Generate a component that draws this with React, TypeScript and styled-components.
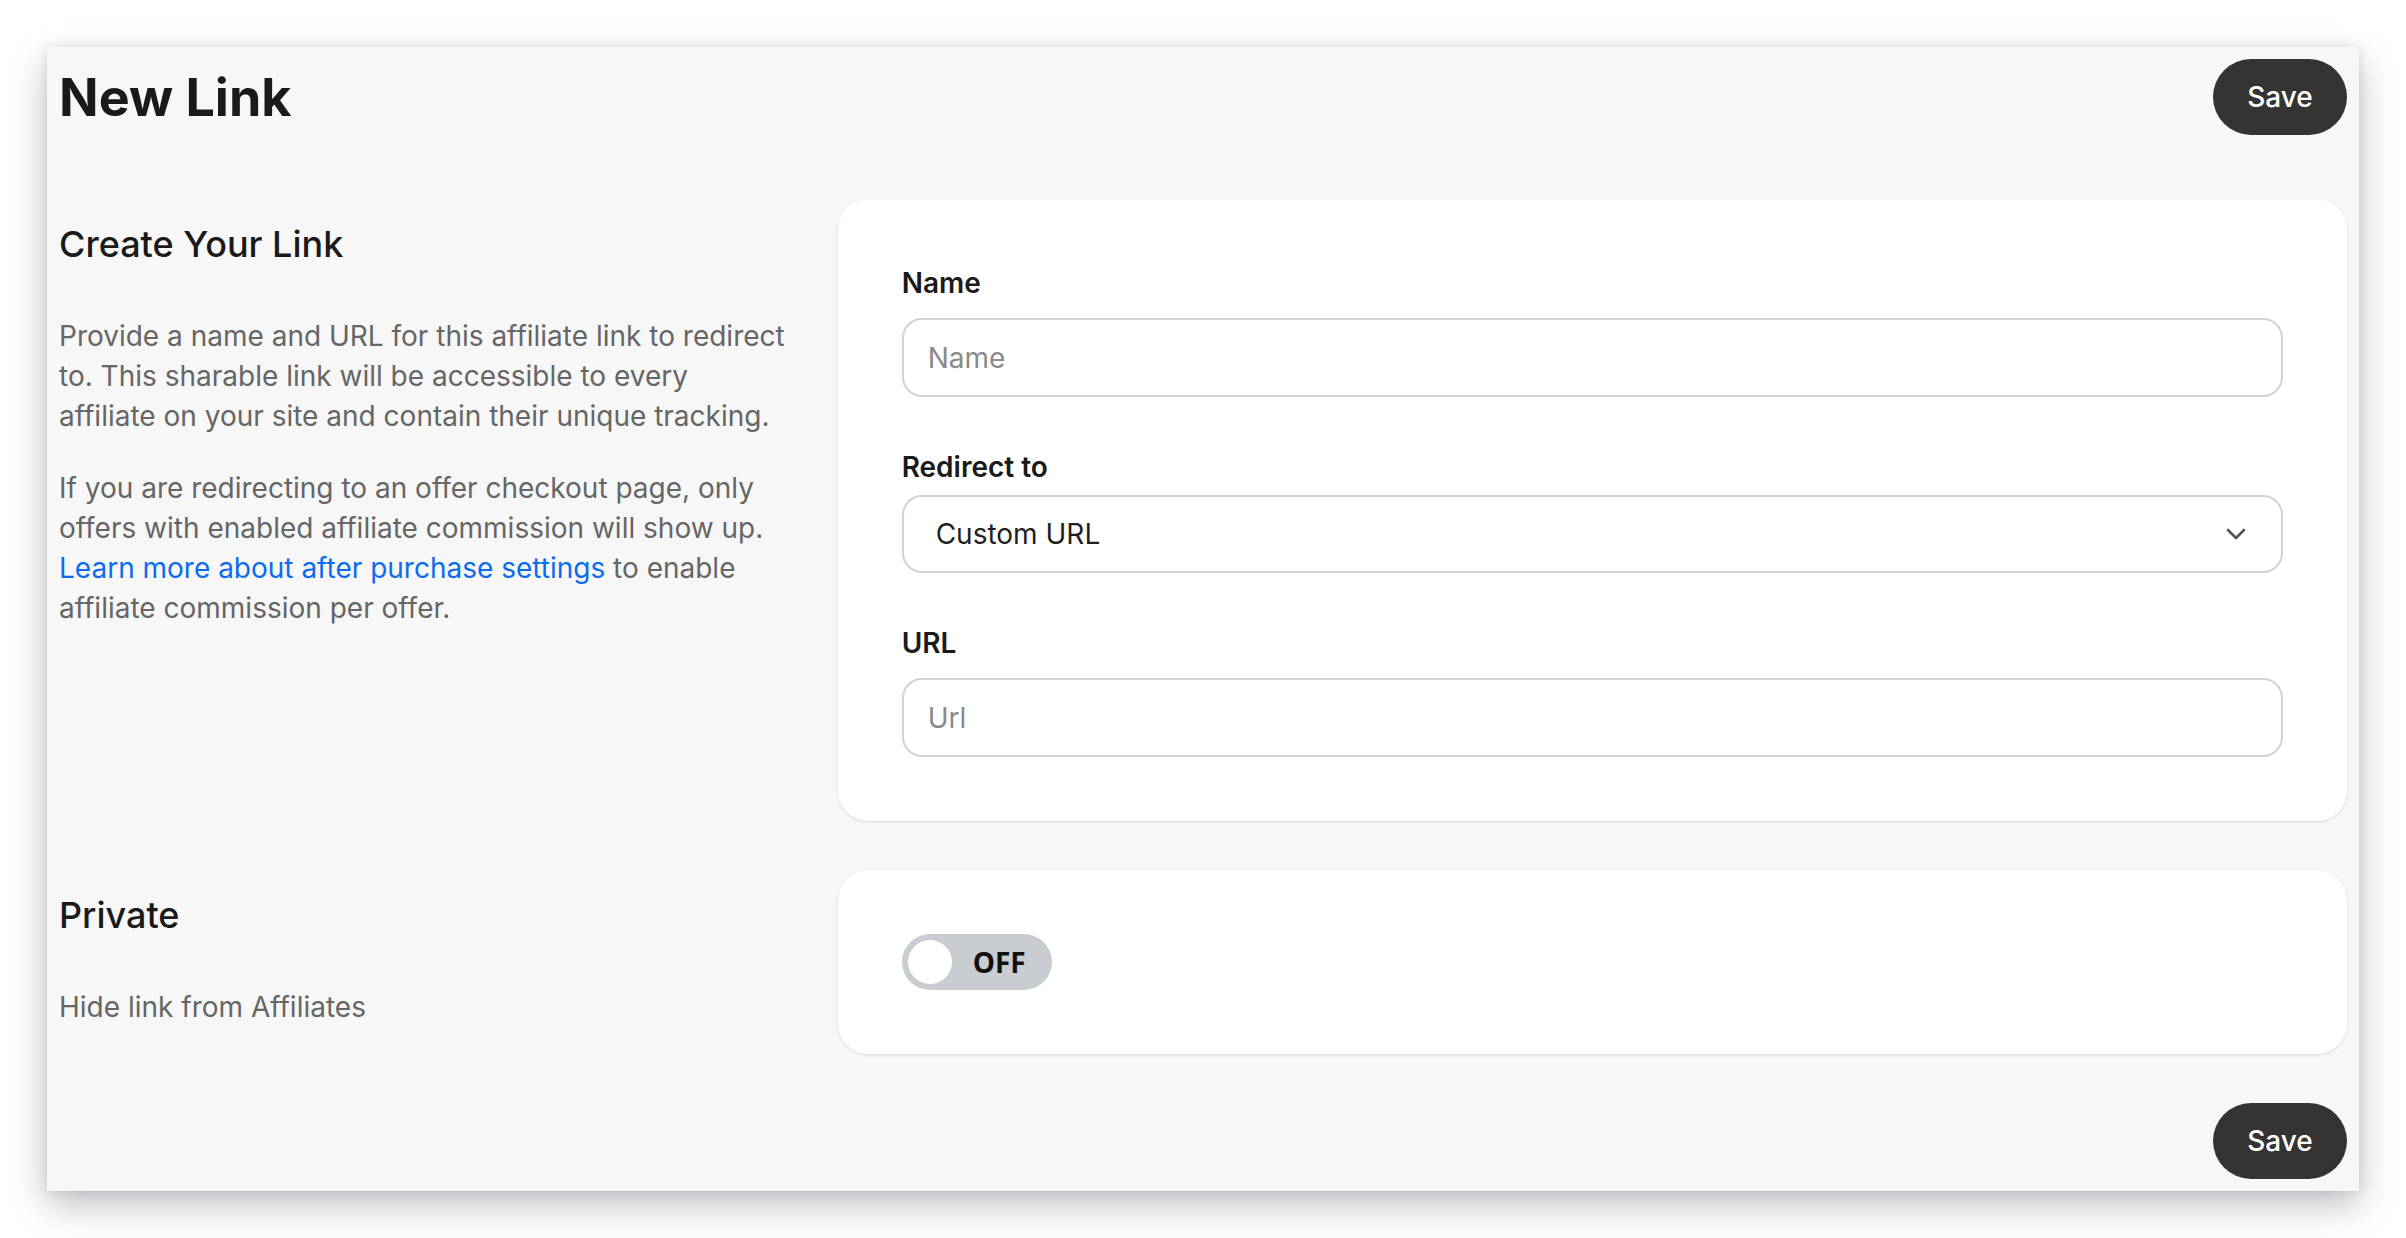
import React, { useState } from 'react'
import styled, { createGlobalStyle } from 'styled-components'

const Global = createGlobalStyle`
  html, body {
    margin: 0;
    padding: 0;
    background: #ffffff;
  }
  body {
    font-family: Inter, "Noto Sans", "Liberation Sans", sans-serif;
    -webkit-font-smoothing: antialiased;
  }
  * { box-sizing: border-box; }
`

export default function App() {
  const [isPrivate, setPrivate] = useState(false)
  const [redirect, setRedirect] = useState('custom')

  return (
    <Page>
      <Global />
      <Panel>
        <Header>
          <Title>New Link</Title>
          <SaveButton>Save</SaveButton>
        </Header>

        <Section>
          <Intro>
            <SectionTitle>Create Your Link</SectionTitle>
            <Text>
              Provide a name and URL for this affiliate link to redirect to. This sharable link will be
              accessible to every affiliate on your site and contain their unique tracking.
            </Text>
            <Text>
              If you are redirecting to an offer checkout page, only offers with enabled affiliate
              commission will show up. <a href="#">Learn more about after purchase settings</a> to enable
              affiliate commission per offer.
            </Text>
          </Intro>
          <Card>
            <Field>
              <Label>Name</Label>
              <Input placeholder="Name" />
            </Field>
            <Field tight>
              <Label>Redirect to</Label>
              <SelectWrap>
                <Select value={redirect} onChange={e => setRedirect(e.target.value)}>
                  <option value="custom">Custom URL</option>
                  <option value="offer">Offer checkout page</option>
                </Select>
                <Chevron viewBox="0 0 20 12" aria-hidden>
                  <path d="M2 2l8 8 8-8" />
                </Chevron>
              </SelectWrap>
            </Field>
            <Field>
              <Label>URL</Label>
              <Input placeholder="Url" />
            </Field>
          </Card>
        </Section>

        <Section>
          <Intro>
            <SectionTitle>Private</SectionTitle>
            <Text>Hide link from Affiliates</Text>
          </Intro>
          <Card>
            <Toggle on={isPrivate} onClick={() => setPrivate(!isPrivate)}>
              <Knob on={isPrivate} />
              <ToggleText>{isPrivate ? 'ON' : 'OFF'}</ToggleText>
            </Toggle>
          </Card>
        </Section>

        <Footer>
          <SaveButton>Save</SaveButton>
        </Footer>
      </Panel>
    </Page>
  )
}

const Page = styled.div`
  padding: 47px;
  min-height: 1238px;
`

const Panel = styled.div`
  background: #f7f7f7;
  padding: 12px;
  height: 1144px;
  display: flex;
  flex-direction: column;
  box-shadow: 0 14px 34px rgba(40, 44, 58, 0.3), 0 0 10px rgba(40, 44, 58, 0.1);
`

const Header = styled.div`
  display: flex;
  align-items: center;
  justify-content: space-between;
  margin-bottom: 64px;
`

const Title = styled.h1`
  margin: 0;
  font-size: 52px;
  font-weight: 700;
  color: #1a1a1a;
`

const SaveButton = styled.button`
  height: 76px;
  width: 134px;
  border: none;
  border-radius: 38px;
  background: #353432;
  color: #ffffff;
  font-family: Inter, "Noto Sans", sans-serif;
  font-size: 28px;
  font-weight: 500;
  cursor: pointer;
`

const Section = styled.div`
  display: grid;
  grid-template-columns: 1fr 2fr;
  column-gap: 24px;
  margin-bottom: 49px;
`

const Intro = styled.div`
  padding: 23px 24px 0 0;
`

const SectionTitle = styled.h2`
  margin: 0 0 50px;
  font-size: 36px;
  line-height: 44px;
  font-weight: 500;
  color: #1a1a1a;
`

const Text = styled.p`
  margin: 0 0 32px;
  font-size: 28px;
  line-height: 40px;
  color: #666666;
  &:last-child {
    margin-bottom: 0;
  }
  a {
    color: #0b6cf0;
    text-decoration: none;
  }
`

const Card = styled.div`
  background: #ffffff;
  border-radius: 30px;
  padding: 64px 64px;
  box-shadow: 0 1px 3px rgba(0, 0, 0, 0.12);
`

const Field = styled.div<{ tight?: boolean }>`
  display: flex;
  flex-direction: column;
  gap: ${p => (p.tight ? '10px' : '17px')};
  & + & {
    margin-top: 52px;
  }
  &:first-child {
    padding-top: 2px;
  }
`

const Label = styled.label`
  font-size: 28px;
  line-height: 36px;
  font-weight: 600;
  color: #1a1a1a;
`

const Input = styled.input`
  height: 79px;
  width: 100%;
  border: 2px solid #d2d2d2;
  border-radius: 20px;
  padding: 0 24px;
  font-family: Inter, "Noto Sans", sans-serif;
  font-size: 28px;
  color: #1a1a1a;
  background: #ffffff;
  outline: none;
  &::placeholder {
    color: #8a8a8a;
  }
`

const SelectWrap = styled.div`
  position: relative;
`

const Select = styled.select`
  appearance: none;
  -webkit-appearance: none;
  height: 78px;
  width: 100%;
  border: 2px solid #d2d2d2;
  border-radius: 20px;
  padding: 0 32px;
  font-family: Inter, "Noto Sans", sans-serif;
  font-size: 28px;
  color: #1f1f1f;
  background: #ffffff;
  outline: none;
`

const Chevron = styled.svg`
  position: absolute;
  right: 37px;
  top: 50%;
  width: 20px;
  height: 12px;
  transform: translateY(-50%);
  fill: none;
  stroke: #555555;
  stroke-width: 2.6;
  stroke-linecap: round;
  stroke-linejoin: round;
  pointer-events: none;
`

const Toggle = styled.button<{ on: boolean }>`
  display: flex;
  align-items: center;
  width: 150px;
  height: 56px;
  padding: 0 6px;
  border: none;
  border-radius: 28px;
  background: ${p => (p.on ? '#353432' : '#c9ccd1')};
  cursor: pointer;
`

const Knob = styled.span<{ on: boolean }>`
  width: 44px;
  height: 44px;
  border-radius: 50%;
  background: #ffffff;
  flex: none;
`

const ToggleText = styled.span`
  margin-left: 21px;
  font-family: "Open Sans", "Noto Sans", sans-serif;
  font-size: 28px;
  font-weight: 700;
  color: #111111;
`

const Footer = styled.div`
  margin-top: auto;
  display: flex;
  justify-content: flex-end;
`
